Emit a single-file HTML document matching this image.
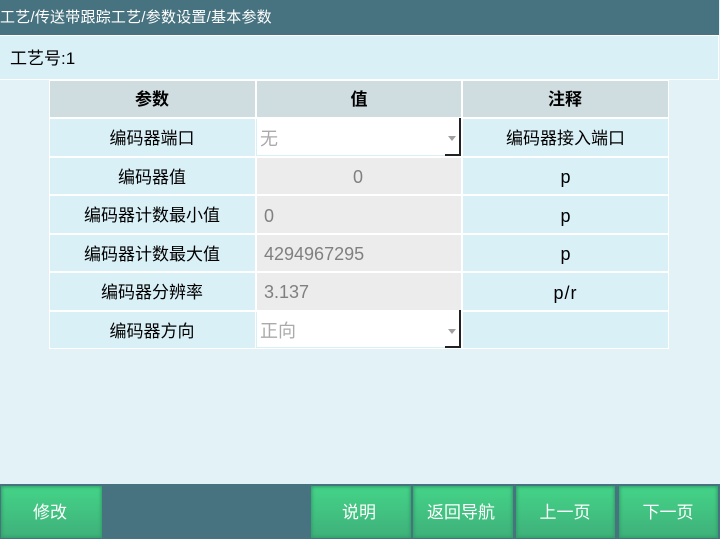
<!DOCTYPE html>
<html><head><meta charset="utf-8">
<style>
html,body{margin:0;padding:0}
body{width:720px;height:539px;overflow:hidden;position:relative;background:#e2f2f7;font-family:"Liberation Sans","Noto Sans CJK SC",sans-serif;color:#000}
div{position:absolute;box-sizing:border-box;white-space:nowrap}
.top{left:0;top:0;width:719px;height:35px;background:#47727f;color:#fff;font-size:15px;letter-spacing:.22px;line-height:35px}
.info{left:0;top:35px;width:719px;height:45px;background:#d9f0f7;border:1px solid #fff;border-left:0;font-size:17px;line-height:46px;padding-left:10px}
.tb{left:49px;top:80px;width:620px;height:269px;background:#fff}
.c{text-align:center;font-size:17px;background:#d9f0f7}
.h{background:#cfdce0;font-weight:bold}
.g{background:#ececec;color:#808080;font-size:18px;padding-left:7px}
.s{background:#fff;color:#aaa;font-size:18px;padding-left:3px;border:1px solid #d9f0f7;border-right:0;border-top:0}
.c1{left:50px;width:205px;padding-right:1px}
.c2{left:257px;width:204px}
.c3{left:463px;width:205px}
.sq{position:absolute;right:0;bottom:-1px;width:16px;height:38px;border-right:2px solid #222;}
.sb{position:absolute;right:0;bottom:-1px;width:16px;height:2px;background:#222}
.ar{position:absolute;left:191px;top:17px;width:0;height:0;border-left:4px solid transparent;border-right:4px solid transparent;border-top:5px solid #a0a0a0}
.bar{left:0;top:484px;width:720px;height:55px;background:#47727f}
.b{top:486px;height:52px;background:linear-gradient(#44d488,#3fb07a);box-shadow:inset 0 0 3px 1px #2f9d66;color:#fff;font-size:17px;line-height:53px;text-align:center}
</style></head><body>
<div class="top">工艺/传送带跟踪工艺/参数设置/基本参数</div>
<div class="info">工艺号:1</div>
<div class="tb"></div>

<div class="c h c1" style="top:81px;height:36px;line-height:37px">参数</div>
<div class="c h c2" style="top:81px;height:36px;line-height:37px">值</div>
<div class="c h c3" style="top:81px;height:36px;line-height:37px;padding-right:1px">注释</div>

<div class="c c1" style="top:119px;height:37px;line-height:40px">编码器端口</div>
<div class="s c2" style="top:119px;height:37px;line-height:41px;left:256px;width:205px">无<span class="ar"></span><span class="sq"></span><span class="sb"></span></div>
<div class="c c3" style="top:119px;height:37px;line-height:40px">编码器接入端口</div>

<div class="c c1" style="top:158px;height:36px;line-height:39px">编码器值</div>
<div class="g c2" style="top:158px;height:36px;line-height:39px;text-align:center;padding:0 2px 0 0">0</div>
<div class="c c3" style="top:158px;height:36px;line-height:39px;font-size:18px">p</div>

<div class="c c1" style="top:196px;height:37px;line-height:40px">编码器计数最小值</div>
<div class="g c2" style="top:196px;height:37px;line-height:40px">0</div>
<div class="c c3" style="top:196px;height:37px;line-height:40px;font-size:18px">p</div>

<div class="c c1" style="top:235px;height:36px;line-height:39px">编码器计数最大值</div>
<div class="g c2" style="top:235px;height:36px;line-height:39px">4294967295</div>
<div class="c c3" style="top:235px;height:36px;line-height:39px;font-size:18px">p</div>

<div class="c c1" style="top:273px;height:37px;line-height:40px">编码器分辨率</div>
<div class="g c2" style="top:273px;height:37px;line-height:38px">3.137</div>
<div class="c c3" style="top:273px;height:37px;line-height:40px;font-size:18px;letter-spacing:1px">p/r</div>

<div class="c c1" style="top:312px;height:36px;line-height:39px">编码器方向</div>
<div class="s c2" style="top:312px;height:36px;line-height:38px;left:256px;width:205px">正向<span class="ar"></span><span class="sq"></span><span class="sb"></span></div>
<div class="c c3" style="top:312px;height:36px"></div>

<div class="bar"></div>
<div class="b" style="left:1px;width:101px;padding-right:3px">修改</div>
<div class="b" style="left:311px;width:100px;padding-right:4px">说明</div>
<div class="b" style="left:413px;width:100px;padding-right:4px">返回导航</div>
<div class="b" style="left:516px;width:99px;padding-right:1px">上一页</div>
<div class="b" style="left:619px;width:99px;padding-right:1px">下一页</div>
</body></html>
